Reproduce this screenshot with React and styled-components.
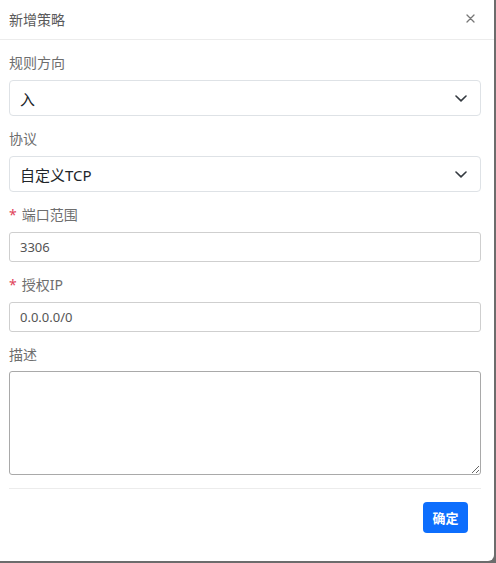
import React from "react";
import styled, { createGlobalStyle } from "styled-components";

const GlobalStyle = createGlobalStyle`
  html, body {
    margin: 0;
    padding: 0;
    background: #6c6c6c;
  }
  * {
    box-sizing: border-box;
  }
`;

const FONT = `"Noto Sans", "Noto Sans CJK SC", sans-serif`;

const Chevron = () => (
  <svg width="12" height="7" viewBox="0 0 12 7" fill="none">
    <path d="M1 1 6 5.8 11 1" stroke="#343a40" strokeWidth="1.6" strokeLinecap="round" strokeLinejoin="round" />
  </svg>
);

const CloseIcon = () => (
  <svg width="9" height="9" viewBox="0 0 9 9">
    <path d="M1 1 8 8M8 1 1 8" stroke="#777" strokeWidth="1.3" strokeLinecap="round" />
  </svg>
);

const fields = [
  { label: "规则方向", kind: "select", value: "入" },
  { label: "协议", kind: "select", value: "自定义TCP" },
  { label: "端口范围", kind: "input", value: "3306", required: true },
  { label: "授权IP", kind: "input", value: "0.0.0.0/0", required: true },
  { label: "描述", kind: "textarea" },
];

const App = () => {
  return (
    <>
      <GlobalStyle />
      <Modal>
        <Header>
          <Title>新增策略</Title>
          <CloseBtn>
            <CloseIcon />
          </CloseBtn>
        </Header>
        <Body>
          {fields.map((f) => (
            <Field key={f.label}>
              <Label>
                {f.required && <Star>*</Star>}
                {f.label}
              </Label>
              {f.kind === "select" && (
                <Select>
                  <span>{f.value}</span>
                  <Chevron />
                </Select>
              )}
              {f.kind === "input" && <Input defaultValue={f.value} />}
              {f.kind === "textarea" && <TextArea />}
            </Field>
          ))}
        </Body>
        <Footer>
          <Button>确定</Button>
        </Footer>
      </Modal>
    </>
  );
};

export default App;

const Modal = styled.div`
  width: 494px;
  height: 561px;
  background: #fff;
  border-bottom-right-radius: 6px;
  font-family: ${FONT};
  display: flex;
  flex-direction: column;
`;

const Header = styled.div`
  height: 40px;
  padding: 0 14px 2px 9px;
  border-bottom: 1px solid #ececec;
  display: flex;
  align-items: center;
  justify-content: space-between;
`;

const Title = styled.div`
  font-size: 14px;
  color: #5a5a5a;
`;

const CloseBtn = styled.div`
  width: 20px;
  height: 20px;
  display: flex;
  align-items: center;
  justify-content: center;
`;

const Body = styled.div`
  padding: 13px 13px 13px 9px;
  display: flex;
  flex-direction: column;
  gap: 13px;
`;

const Field = styled.div`
  display: flex;
  flex-direction: column;
`;

const Label = styled.div`
  height: 20px;
  line-height: 20px;
  font-size: 14px;
  color: #6e6e6e;
  margin-bottom: 7px;
`;

const Star = styled.span`
  color: #e0435a;
  margin-right: 5px;
`;

const Select = styled.div`
  height: 36px;
  border: 1px solid #dee2e6;
  border-radius: 4px;
  padding: 0 13px 0 10px;
  display: flex;
  align-items: center;
  justify-content: space-between;
  font-size: 15px;
  color: #212529;
`;

const Input = styled.input`
  height: 30px;
  border: 1px solid #cfcfcf;
  border-radius: 3px;
  padding: 0 10px;
  font-family: ${FONT};
  font-size: 13px;
  color: #555;
  outline: none;
`;

const TextArea = styled.textarea`
  height: 104px;
  border: 1px solid #a9a9a9;
  border-radius: 3px;
  margin-top: -1px;
  font-family: ${FONT};
  outline: none;
  resize: vertical;
`;

const Footer = styled.div`
  margin: 0 13px 0 9px;
  border-top: 1px solid #ececec;
  padding: 13px 13px 0 0;
  display: flex;
  justify-content: flex-end;
`;

const Button = styled.button`
  width: 45px;
  height: 31px;
  border: none;
  border-radius: 4px;
  background: #0d6efd;
  color: #fff;
  font-family: ${FONT};
  font-size: 13px;
  font-weight: 700;
  padding: 0;
`;
